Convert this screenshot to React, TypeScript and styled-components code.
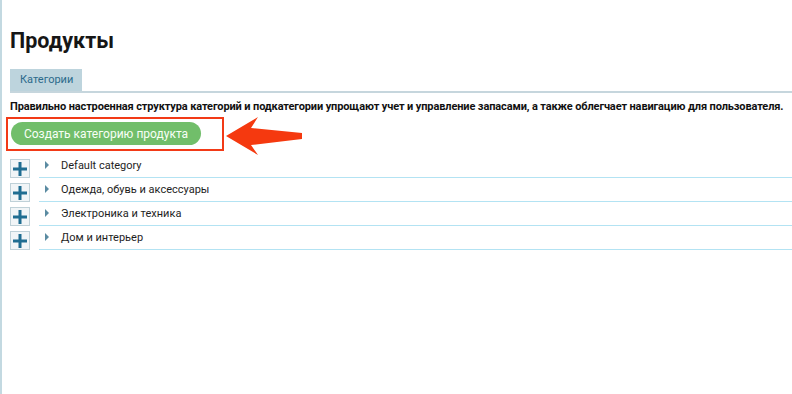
import React from 'react'
import styled, { createGlobalStyle } from 'styled-components'

const GlobalStyle = createGlobalStyle`
  body {
    margin: 0;
    font-family: Roboto, "Liberation Sans", Arial, sans-serif;
    background: #ffffff;
    color: #1a1a1a;
  }
`

const categories = [
  'Default category',
  'Одежда, обувь и аксессуары',
  'Электроника и техника',
  'Дом и интерьер',
]

const PlusIcon = () => (
  <svg width="14" height="14" viewBox="0 0 14 14">
    <rect x="5.5" y="0" width="3" height="14" fill="#1f6d91" />
    <rect x="0" y="5.5" width="14" height="3" fill="#1f6d91" />
  </svg>
)

const Arrow = () => (
  <ArrowSvg width="80" height="42" viewBox="0 0 80 42">
    <path
      d="M2 20 L34 1 L27 12 L78 17 L78 23 L27 29 L34 39 Z"
      fill="#f5390f"
    />
  </ArrowSvg>
)

const App = () => {
  return (
    <Page>
      <GlobalStyle />
      <Title>Продукты</Title>
      <Tabs>
        <Tab>Категории</Tab>
      </Tabs>
      <Hint>
        Правильно настроенная структура категорий и подкатегории упрощают учет и управление запасами, а также облегчает навигацию для пользователя.
      </Hint>
      <ActionRow>
        <Highlight>
          <CreateButton>Создать категорию продукта</CreateButton>
        </Highlight>
        <Arrow />
      </ActionRow>
      <Tree>
        {categories.map((name) => (
          <TreeRow key={name}>
            <ExpandBox>
              <PlusIcon />
            </ExpandBox>
            <TreeLabel>
              <Caret />
              {name}
            </TreeLabel>
          </TreeRow>
        ))}
      </Tree>
    </Page>
  )
}

export default App

const Page = styled.div`
  min-height: 394px;
  box-sizing: border-box;
  border-left: 2px solid #c3d9e1;
  padding: 28px 0 0 8px;
`

const Title = styled.h1`
  margin: 0;
  font-size: 21.5px;
  line-height: 26px;
  font-weight: 700;
  color: #161616;
`

const Tabs = styled.div`
  display: flex;
  margin-top: 15px;
  border-bottom: 2px solid #c6d6dd;
`

const Tab = styled.div`
  background: #bdd4dd;
  color: #2b6a8b;
  font-size: 11px;
  line-height: 22px;
  padding: 0 9px 0 10px;
`

const Hint = styled.p`
  margin: 7px 0 0;
  font-size: 11px;
  letter-spacing: -0.12px;
  line-height: 14px;
  font-weight: 700;
  color: #111;
  white-space: nowrap;
`

const ActionRow = styled.div`
  display: flex;
  align-items: flex-start;
  margin-top: 3px;
  margin-left: -4px;
`

const ArrowSvg = styled.svg`
  margin-top: -1px;
  flex-shrink: 0;
`

const Highlight = styled.div`
  border: 2px solid #f23a17;
  padding: 3px 21px 4px 3px;
  display: flex;
`

const CreateButton = styled.button`
  border: none;
  border-radius: 12px;
  background: #71be6a;
  color: #f8fff6;
  font-family: inherit;
  font-size: 12px;
  height: 23px;
  width: 190px;
  padding: 0;
  cursor: pointer;
`

const Tree = styled.div`
  margin-top: 1px;
  display: flex;
  flex-direction: column;
`

const TreeRow = styled.div`
  display: flex;
  align-items: flex-start;
  height: 24px;
`

const ExpandBox = styled.div`
  width: 20px;
  height: 19px;
  box-sizing: border-box;
  border: 1px solid #bfd1d8;
  background: #f1f5f7;
  display: flex;
  align-items: center;
  justify-content: center;
`

const TreeLabel = styled.div`
  flex: 1;
  margin-left: 9px;
  height: 18px;
  border-bottom: 1px solid #b3e3f3;
  display: flex;
  align-items: flex-start;
  font-size: 11px;
  line-height: 13px;
  color: #1e1e1e;
`

const Caret = styled.span`
  width: 0;
  height: 0;
  margin: 2px 12px 0 6px;
  border-top: 4.5px solid transparent;
  border-bottom: 4.5px solid transparent;
  border-left: 4.5px solid #5b8ba2;
`
